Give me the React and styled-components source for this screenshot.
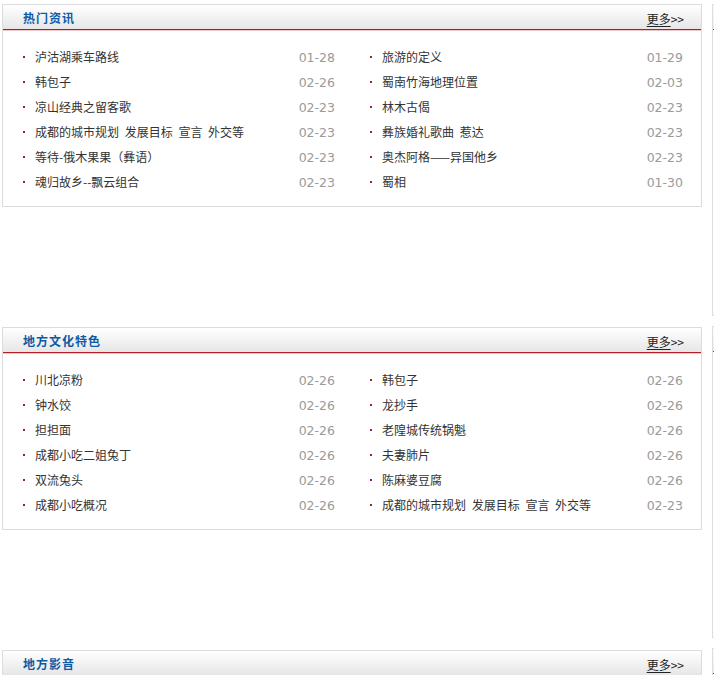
import React from "react";
import styled, { createGlobalStyle } from "styled-components";

const Global = createGlobalStyle`
  html, body { margin: 0; padding: 0; background: #fff; overflow: hidden; }
  body { font-family: "Noto Sans CJK SC", "Noto Sans", sans-serif; font-size: 12px; color: #333; }
`;

const Page = styled.div`
  display: flex;
  gap: 10px;
  padding: 4px 0 0 2px;
  width: 1000px;
`;

const MainCol = styled.div`
  width: 700px;
  display: flex;
  flex-direction: column;
  gap: 120px;
  flex-shrink: 0;
`;

const SideCol = styled.div`
  width: 200px;
  display: flex;
  flex-direction: column;
  gap: 10px;
  flex-shrink: 0;
`;

const SideBox = styled.div`
  height: 312px;
  border: 1px solid #ddd;
  box-sizing: border-box;
  background: linear-gradient(#fff, #e9e9e9) no-repeat;
  background-size: 100% 25px;
  position: relative;
  &::after {
    content: "";
    position: absolute;
    left: 0; right: 0; top: 24px;
    height: 1px;
    background: #b71c24;
  }
`;

const Panel = styled.div`
  border: 1px solid #dcdcdc;
  height: 203px;
  box-sizing: border-box;
  background: #fff;
`;

const Header = styled.div`
  height: 24px;
  display: flex;
  align-items: center;
  justify-content: space-between;
  padding: 0 17px 0 20px;
  background: linear-gradient(#ffffff, #e6e6e6);
  border-bottom: 1px solid #b71c24;
  box-shadow: 0 1px 0 #f3c4c6;
`;

const Title = styled.h2`
  margin: 0;
  font-size: 12px;
  font-weight: bold;
  color: #0d5ba6;
  letter-spacing: 1px;
`;

const More = styled.a`
  font-size: 12px;
  color: #222;
  text-decoration: none;
  padding-top: 2px;
  span { text-decoration: underline; text-underline-offset: 2px; }
`;

const List = styled.ul`
  list-style: none;
  margin: 0;
  padding: 14px 17px 0 20px;
  display: grid;
  grid-template-columns: 312px 313px;
  column-gap: 35px;
  grid-auto-flow: column;
  grid-template-rows: repeat(6, 25px);
`;

const Item = styled.li`
  display: flex;
  align-items: center;
  justify-content: space-between;
  height: 25px;
`;

const Link = styled.a`
  display: flex;
  align-items: center;
  color: #333;
  text-decoration: none;
  font-size: 12px;
  word-spacing: 3px;
  &::before {
    content: "";
    width: 2px;
    height: 2px;
    background: #9b2040;
    margin: 0 10px 0 0;
    flex-shrink: 0;
  }
`;

const Date = styled.span`
  font-family: "DejaVu Sans", "Liberation Sans", sans-serif;
  font-size: 12.5px;
  color: #9a9a9a;
  padding-top: 2px;
`;

const sections = [
  {
    title: "热门资讯",
    items: [
      ["泸沽湖乘车路线", "01-28"],
      ["韩包子", "02-26"],
      ["凉山经典之留客歌", "02-23"],
      ["成都的城市规划 发展目标 宣言 外交等", "02-23"],
      ["等待-俄木果果（彝语）", "02-23"],
      ["魂归故乡--飘云组合", "02-23"],
      ["旅游的定义", "01-29"],
      ["蜀南竹海地理位置", "02-03"],
      ["林木古偈", "02-23"],
      ["彝族婚礼歌曲 惹达", "02-23"],
      ["奥杰阿格——异国他乡", "02-23"],
      ["蜀相", "01-30"],
    ],
  },
  {
    title: "地方文化特色",
    items: [
      ["川北凉粉", "02-26"],
      ["钟水饺", "02-26"],
      ["担担面", "02-26"],
      ["成都小吃二姐兔丁", "02-26"],
      ["双流兔头", "02-26"],
      ["成都小吃概况", "02-26"],
      ["韩包子", "02-26"],
      ["龙抄手", "02-26"],
      ["老隍城传统锅魁", "02-26"],
      ["夫妻肺片", "02-26"],
      ["陈麻婆豆腐", "02-26"],
      ["成都的城市规划 发展目标 宣言 外交等", "02-23"],
    ],
  },
  { title: "地方影音", items: [] },
];

export default function App() {
  return (
    <>
      <Global />
      <Page>
        <MainCol>
          {sections.map((s) => (
            <Panel key={s.title}>
              <Header>
                <Title>{s.title}</Title>
                <More href="#"><span>更多</span>&gt;&gt;</More>
              </Header>
              <List>
                {s.items.map(([t, d], i) => (
                  <Item key={i}>
                    <Link href="#">{t}</Link>
                    <Date>{d}</Date>
                  </Item>
                ))}
              </List>
            </Panel>
          ))}
        </MainCol>
        <SideCol>
          <SideBox />
          <SideBox />
          <SideBox />
        </SideCol>
      </Page>
    </>
  );
}
